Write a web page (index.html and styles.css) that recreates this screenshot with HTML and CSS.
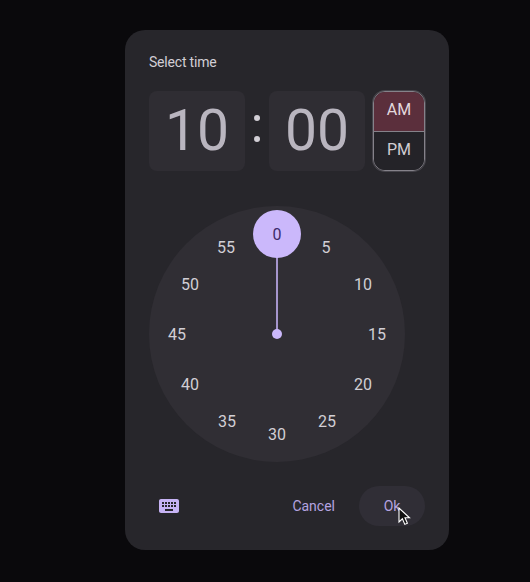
FILE: index.html
```html
<!DOCTYPE html>
<html lang="en">
<head>
<meta charset="utf-8">
<title>Select time</title>
<link rel="stylesheet" href="styles.css">
</head>
<body>
<div class="dialog">
  <div class="title">Select time</div>
  <div class="time-row">
    <div class="field">10</div>
    <div class="colon"><span class="dot"></span><span class="dot"></span></div>
    <div class="field">00</div>
    <div class="period">
      <div class="period-item period-on">AM</div>
      <div class="period-item period-off">PM</div>
    </div>
  </div>
  <div class="clock">
    <div class="hand"></div>
    <div class="pivot"></div>
    <div class="selected">0</div>
    <span class="num n5">5</span>
    <span class="num n10">10</span>
    <span class="num n15">15</span>
    <span class="num n20">20</span>
    <span class="num n25">25</span>
    <span class="num n30">30</span>
    <span class="num n35">35</span>
    <span class="num n40">40</span>
    <span class="num n45">45</span>
    <span class="num n50">50</span>
    <span class="num n55">55</span>
  </div>
  <div class="actions">
    <svg class="kbd" width="24" height="24" viewBox="0 0 24 24">
      <path fill="#c6b3f4" d="M20 5H4c-1.100 0-1.990.9-1.990 2L2 17c0 1.100.9 2 2 2h16c1.100 0 2-.9 2-2V7c0-1.100-.9-2-2-2zm-9 3h2v2h-2V8zm0 3h2v2h-2v-2zM8 8h2v2H8V8zm0 3h2v2H8v-2zm-1 2H5v-2h2v2zm0-3H5V8h2v2zm9 7H8v-2h8v2zm0-4h-2v-2h2v2zm0-3h-2V8h2v2zm3 3h-2v-2h2v2zm0-3h-2V8h2v2z"/>
    </svg>
    <div class="spacer"></div>
    <div class="btn">Cancel</div>
    <div class="btn btn-hover">Ok</div>
  </div>
</div>
<svg class="cursor" width="13" height="19" viewBox="0 0 13 19">
  <path d="M1 1v14l3.400-3.200 2.400 5.600 2.600-1.100-2.400-5.500H11.500z" fill="#111" stroke="#fff" stroke-width="1.100"/>
</svg>
</body>
</html>
```

FILE: styles.css
```css
* { box-sizing: border-box; }
html, body { height: 100%; }
body {
  margin: 0;
  background: #0a090c;
  font-family: Roboto, "Liberation Sans", sans-serif;
  padding: 30px 0 0 125px;
  overflow: hidden;
}
.dialog {
  width: 324px;
  height: 520px;
  background: #27262b;
  border-radius: 20px;
  padding: 24px;
  display: flex;
  flex-direction: column;
}
.title {
  font-size: 14px;
  line-height: 16px;
  letter-spacing: -0.2px;
  color: #d2ced5;
  height: 16px;
}
.time-row {
  display: flex;
  margin-top: 21px;
  height: 80px;
}
.field {
  width: 96px;
  height: 80px;
  background: #2f2d33;
  border-radius: 8px;
  color: #b9b5bf;
  font-size: 57px;
  line-height: 80px;
  text-align: center;
}
.colon {
  width: 24px;
  display: flex;
  flex-direction: column;
  align-items: center;
  justify-content: center;
  gap: 15px;
  padding-bottom: 5px;
}
.dot {
  width: 6px;
  height: 6px;
  border-radius: 50%;
  background: #d2cfd6;
}
.period {
  width: 52px;
  height: 80px;
  margin-left: 8px;
  border: 1px solid #85828a;
  box-shadow: 0 0 0 1px rgba(133, 130, 138, 0.35);
  border-radius: 12px;
  overflow: hidden;
  display: flex;
  flex-direction: column;
}
.period-item {
  flex: 1;
  display: flex;
  align-items: center;
  justify-content: center;
  font-size: 16px;
  color: #d0ccd2;
}
.period-on {
  background: #5b2f3c;
  color: #e2d8dc;
  border-bottom: 1px solid #85828a;
  padding-bottom: 5px;
}
.period-off {
  background: #242328;
  padding-bottom: 4px;
}
.clock {
  position: relative;
  width: 256px;
  height: 256px;
  margin-top: 35px;
  border-radius: 50%;
  background: #302e34;
  flex: none;
}
.hand {
  position: absolute;
  left: 127px;
  top: 28px;
  width: 2px;
  height: 100px;
  background: #a595cc;
}
.pivot {
  position: absolute;
  left: 123px;
  top: 123px;
  width: 10px;
  height: 10px;
  border-radius: 50%;
  background: #cbb8fb;
}
.selected {
  position: absolute;
  left: 104px;
  top: 4px;
  width: 48px;
  height: 48px;
  padding-top: 1px;
  border-radius: 50%;
  background: #cbb8fb;
  color: #3d2a69;
  font-size: 16px;
  line-height: 48px;
  text-align: center;
}
.num {
  position: absolute;
  width: 32px;
  height: 24px;
  margin: -11px 0 0 -16px;
  color: #d2cfd5;
  font-size: 16px;
  line-height: 24px;
  text-align: center;
}
.n5  { left: 177px; top: 41px; }
.n10 { left: 214px; top: 78px; }
.n15 { left: 228px; top: 128px; }
.n20 { left: 214px; top: 178px; }
.n25 { left: 178px; top: 215px; }
.n30 { left: 128px; top: 228px; }
.n35 { left: 78px;  top: 215px; }
.n40 { left: 41px;  top: 178px; }
.n45 { left: 28px;  top: 128px; }
.n50 { left: 41px;  top: 78px; }
.n55 { left: 77px;  top: 41px; }
.actions {
  display: flex;
  align-items: center;
  height: 40px;
  margin-top: 24px;
}
.kbd { margin-left: 8px; flex: none; }
.spacer { flex: 1; }
.btn {
  height: 40px;
  padding: 0 24px;
  border-radius: 20px;
  color: #b5a3e0;
  font-size: 14px;
  line-height: 40px;
  text-align: center;
}
.btn-hover { width: 66px; padding: 0; background: #302e36; }
.cursor {
  position: absolute;
  left: 398px;
  top: 507px;
}
```
